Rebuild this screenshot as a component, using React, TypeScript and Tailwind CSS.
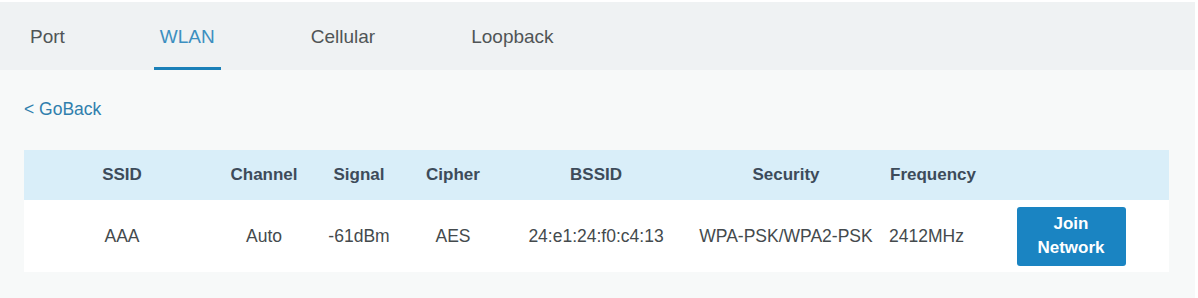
import React from 'react';

const tabs = ['Port', 'WLAN', 'Cellular', 'Loopback'];

const columns = ['SSID', 'Channel', 'Signal', 'Cipher', 'BSSID', 'Security', 'Frequency'];

const networks = [
  { ssid: 'AAA', channel: 'Auto', signal: '-61dBm', cipher: 'AES', bssid: '24:e1:24:f0:c4:13', security: 'WPA-PSK/WPA2-PSK', frequency: '2412MHz' },
];

const grid = 'grid grid-cols-[196px_88px_102px_86px_200px_180px_114px_162px_1fr] items-center';

export default function App() {
  return (
    <div className="w-[1198px] h-[298px] bg-white pt-[2px] overflow-hidden" style={{ fontFamily: '"Liberation Sans", Arial, sans-serif' }}>
      <div className="w-[1195px] h-[296px] bg-[#f7f9f9]">
        {/* tabs */}
        <div className="h-[68px] bg-[#eff2f3] flex pl-[24px]">
          {tabs.map((t) => {
            const active = t === 'WLAN';
            return (
              <div
                key={t}
                className={
                  'h-full flex items-center px-[6px] text-[19px] border-b-[3px] ' +
                  (active ? 'text-[#3c8fc0] border-[#1a80b8]' : 'text-[#505556] border-transparent')
                }
                style={{ marginRight: t === 'Port' ? 83 : 84 }}
              >
                <span className="mt-[5px]">{t}</span>
              </div>
            );
          })}
        </div>

        <div className="px-[24px] pt-[27px]">
          <a className="text-[17.5px] text-[#2f7fad] leading-[24px] cursor-pointer">&lt; GoBack</a>

          <div className="mt-[28px] w-[1145px]">
            <div className={grid + ' h-[50px] bg-[#d9eef9] text-[17px] font-bold text-[#3d4b5a]'}>
              {columns.map((c) => (
                <div key={c} className="text-center">{c}</div>
              ))}
              <div />
              <div />
            </div>
            {networks.map((n) => (
              <div key={n.bssid} className={grid + ' h-[72px] bg-white text-[17.5px] text-[#444a4d]'}>
                <div className="text-center">{n.ssid}</div>
                <div className="text-center">{n.channel}</div>
                <div className="text-center">{n.signal}</div>
                <div className="text-center">{n.cipher}</div>
                <div className="text-center">{n.bssid}</div>
                <div className="text-center whitespace-nowrap">{n.security}</div>
                <div className="text-left pl-[13px]">{n.frequency}</div>
                <div className="flex justify-center">
                  <button className="w-[109px] h-[59px] rounded-[3px] bg-[#1a84c2] text-white text-[17px] font-bold leading-[24px]">
                    Join
                    <br />
                    Network
                  </button>
                </div>
                <div />
              </div>
            ))}
          </div>
        </div>
      </div>
    </div>
  );
}
